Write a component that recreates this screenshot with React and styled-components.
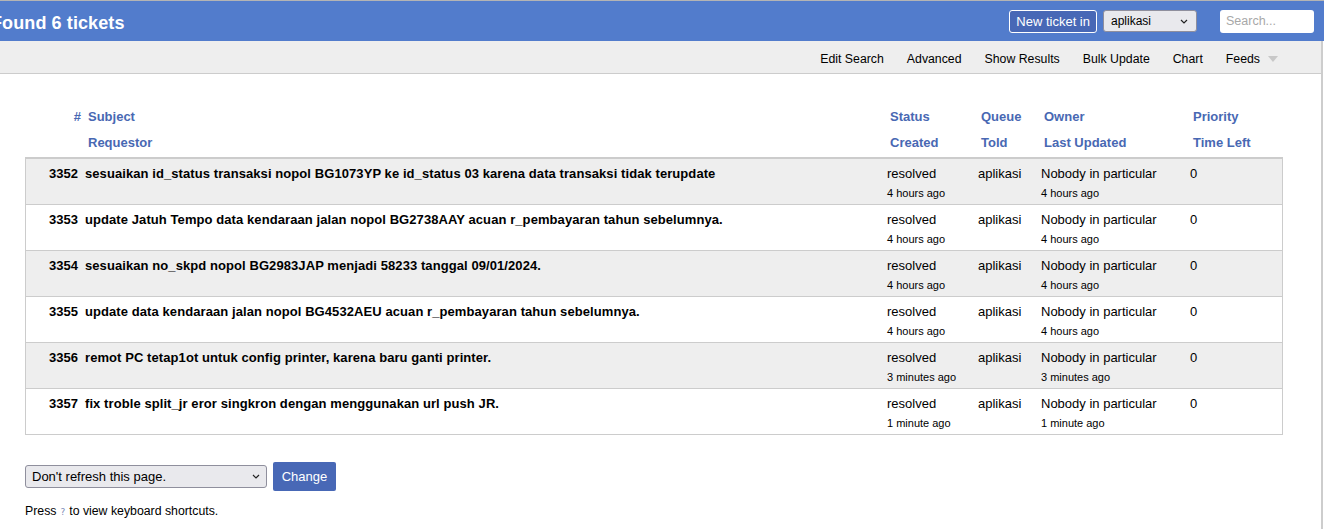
import React from "react";
import styled, { createGlobalStyle } from "styled-components";

const tickets = [
  {
    id: 3352,
    subject:
      "sesuaikan id_status transaksi nopol BG1073YP ke id_status 03 karena data transaksi tidak terupdate",
    created: "4 hours ago",
    updated: "4 hours ago",
  },
  {
    id: 3353,
    subject:
      "update Jatuh Tempo data kendaraan jalan nopol BG2738AAY acuan r_pembayaran tahun sebelumnya.",
    created: "4 hours ago",
    updated: "4 hours ago",
  },
  {
    id: 3354,
    subject: "sesuaikan no_skpd nopol BG2983JAP menjadi 58233 tanggal 09/01/2024.",
    created: "4 hours ago",
    updated: "4 hours ago",
  },
  {
    id: 3355,
    subject:
      "update data kendaraan jalan nopol BG4532AEU acuan r_pembayaran tahun sebelumnya.",
    created: "4 hours ago",
    updated: "4 hours ago",
  },
  {
    id: 3356,
    subject: "remot PC tetap1ot untuk config printer, karena baru ganti printer.",
    created: "3 minutes ago",
    updated: "3 minutes ago",
  },
  {
    id: 3357,
    subject: "fix troble split_jr eror singkron dengan menggunakan url push JR.",
    created: "1 minute ago",
    updated: "1 minute ago",
  },
];

const menu = ["Edit Search", "Advanced", "Show Results", "Bulk Update", "Chart"];

const GlobalStyle = createGlobalStyle`
  html, body {
    margin: 0;
    padding: 0;
    background: #fff;
    font-family: "Liberation Sans", Arial, sans-serif;
    color: #000;
  }
`;

const COLS = "55px 802px 91px 63px 149px 94px";

const Page = styled.div`
  width: 1324px;
  min-height: 529px;
  overflow: hidden;
`;

const TopBar = styled.header`
  height: 40px;
  border-top: 1px solid #b4b4b4;
  background: #527ccc;
  display: flex;
  align-items: center;
  justify-content: space-between;
`;

const Title = styled.h1`
  margin: 5px 0 0 -9px;
  font-size: 18px;
  font-weight: bold;
  color: #fff;
  letter-spacing: 0.1px;
`;

const TopActions = styled.div`
  display: flex;
  align-items: center;
  margin-right: 10px;
`;

const NewTicket = styled.button`
  height: 23px;
  padding: 0 6px;
  background: #4868b6;
  color: #fff;
  border: 1px solid #fff;
  border-radius: 3px;
  font: 13px "Liberation Sans", Arial, sans-serif;
`;

const QueueSelect = styled.div`
  width: 94px;
  height: 22px;
  margin-left: 6px;
  box-sizing: border-box;
  padding: 0 8px 0 7px;
  background: #e9e9ed;
  border: 1px solid #8f8f9d;
  border-radius: 3px;
  display: flex;
  align-items: center;
  justify-content: space-between;
  font-size: 12px;
  color: #000;
`;

const Search = styled.div`
  width: 94px;
  height: 23px;
  margin-left: 23px;
  box-sizing: border-box;
  padding-left: 6px;
  background: #fff;
  border-radius: 3px;
  display: flex;
  align-items: center;
  font-size: 12.5px;
  color: #a8a8a8;
`;

const Body = styled.div`
  margin-right: 1px;
  border-right: 2px solid #cdcdcd;
  min-height: 488px;
`;

const MenuBar = styled.nav`
  height: 33px;
  box-sizing: border-box;
  padding: 3px 43px 0 0;
  background: #eeeeee;
  border-bottom: 1px solid #cccccc;
  display: flex;
  align-items: center;
  justify-content: flex-end;
`;

const MenuItem = styled.span`
  font-size: 12.3px;
  margin-left: 23px;
  color: #000;
  display: flex;
  align-items: center;
`;

const Caret = styled.span`
  width: 0;
  height: 0;
  margin-left: 8px;
  border-left: 5px solid transparent;
  border-right: 5px solid transparent;
  border-top: 6px solid #c8c8c8;
`;

const Content = styled.main`
  padding: 29px 0 0 25px;
`;

const Grid = styled.div`
  display: grid;
  grid-template-columns: ${COLS};
  padding-left: 1px;
`;

const HeadRow = styled(Grid)`
  height: 26px;
  align-items: center;
`;

const HeadCell = styled.span`
  font-size: 13px;
  font-weight: bold;
  color: #4868b3;
  padding-left: ${(p) => (p.$num ? 0 : "7px")};
  text-align: ${(p) => (p.$num ? "right" : "left")};
`;

const Table = styled.div`
  width: 1256px;
  border: 1px solid #cccccc;
  border-top: 2px solid #cccccc;
  margin-top: 2px;
`;

const Row = styled(Grid)`
  padding-left: 0;
  height: 45px;
  background: ${(p) => (p.$odd ? "#eeeeee" : "#ffffff")};
  border-top: ${(p) => (p.$first ? "none" : "1px solid #cccccc")};
  grid-template-rows: 27px 17px;
`;

const Cell = styled.span`
  font-size: 13px;
  padding-left: 4px;
  padding-top: 7px;
  font-weight: ${(p) => (p.$bold ? "bold" : "normal")};
  letter-spacing: ${(p) => (p.$bold && !p.$num ? "0.08px" : "0")};
  text-align: ${(p) => (p.$num ? "right" : "left")};
  padding-right: ${(p) => (p.$num ? "3px" : "0")};
  white-space: nowrap;
`;

const Small = styled.span`
  font-size: 11px;
  padding: 1px 0 0 4px;
  grid-column: ${(p) => p.$col};
  grid-row: 2;
`;

const Refresh = styled.form`
  display: flex;
  align-items: center;
  margin-top: 27px;
`;

const RefreshSelect = styled.div`
  width: 242px;
  height: 23px;
  box-sizing: border-box;
  padding: 0 6px;
  background: #e9e9ed;
  border: 1px solid #8f8f9d;
  border-radius: 3px;
  display: flex;
  align-items: center;
  justify-content: space-between;
  font-size: 13px;
`;

const ChangeButton = styled.button`
  margin-left: 6px;
  width: 63px;
  height: 29px;
  background: #4868b6;
  border: none;
  border-radius: 2px;
  color: #fff;
  font: 13px "Liberation Sans", Arial, sans-serif;
`;

const Hint = styled.p`
  margin: 13px 0 0;
  font-size: 12.3px;
`;

const Key = styled.kbd`
  font: 9px "DejaVu Sans", sans-serif;
  color: #7b8bb8;
  margin: 0 4px;
`;

const Chevron = () => (
  <svg width="8" height="5" viewBox="0 0 8 5">
    <path d="M1 1l3 3 3-3" fill="none" stroke="#222" strokeWidth="1.2" />
  </svg>
);

const App = () => {
  return (
    <Page>
      <GlobalStyle />
      <TopBar>
        <Title>Found 6 tickets</Title>
        <TopActions>
          <NewTicket>New ticket in</NewTicket>
          <QueueSelect>
            aplikasi
            <Chevron />
          </QueueSelect>
          <Search>Search...</Search>
        </TopActions>
      </TopBar>
      <Body>
        <MenuBar>
          {menu.map((m) => (
            <MenuItem key={m}>{m}</MenuItem>
          ))}
          <MenuItem>
            Feeds
            <Caret />
          </MenuItem>
        </MenuBar>
        <Content>
          <HeadRow>
            <HeadCell $num>#</HeadCell>
            <HeadCell>Subject</HeadCell>
            <HeadCell>Status</HeadCell>
            <HeadCell>Queue</HeadCell>
            <HeadCell>Owner</HeadCell>
            <HeadCell>Priority</HeadCell>
          </HeadRow>
          <HeadRow>
            <HeadCell $num />
            <HeadCell>Requestor</HeadCell>
            <HeadCell>Created</HeadCell>
            <HeadCell>Told</HeadCell>
            <HeadCell>Last Updated</HeadCell>
            <HeadCell>Time Left</HeadCell>
          </HeadRow>
          <Table>
            {tickets.map((t, i) => (
              <Row key={t.id} $odd={i % 2 === 0} $first={i === 0}>
                <Cell $bold $num>
                  {t.id}
                </Cell>
                <Cell $bold>{t.subject}</Cell>
                <Cell>resolved</Cell>
                <Cell>aplikasi</Cell>
                <Cell>Nobody in particular</Cell>
                <Cell>0</Cell>
                <Small $col={3}>{t.created}</Small>
                <Small $col={5}>{t.updated}</Small>
              </Row>
            ))}
          </Table>
          <Refresh>
            <RefreshSelect>
              Don't refresh this page.
              <Chevron />
            </RefreshSelect>
            <ChangeButton type="button">Change</ChangeButton>
          </Refresh>
          <Hint>
            Press<Key>?</Key>to view keyboard shortcuts.
          </Hint>
        </Content>
      </Body>
    </Page>
  );
};

export default App;
